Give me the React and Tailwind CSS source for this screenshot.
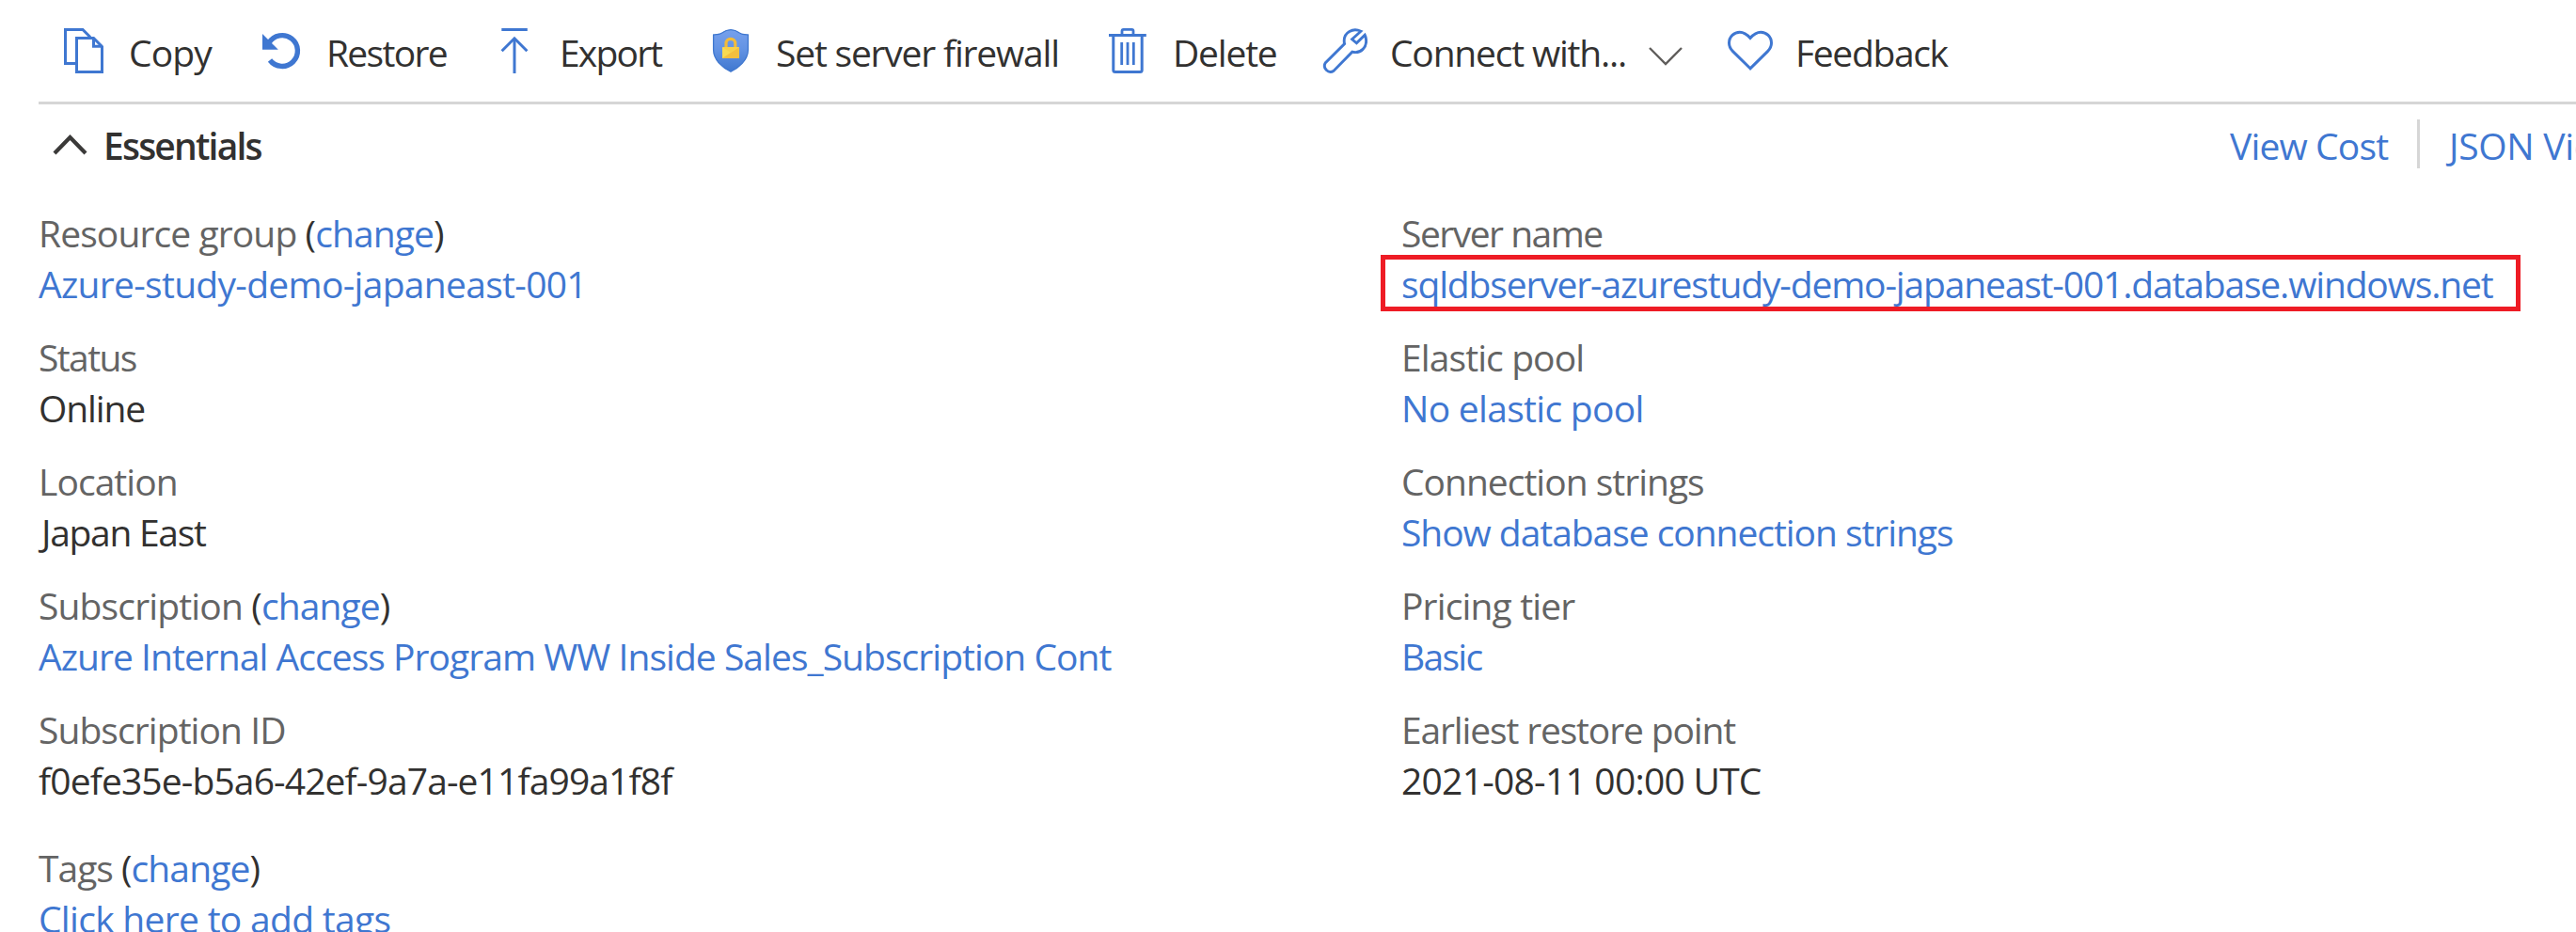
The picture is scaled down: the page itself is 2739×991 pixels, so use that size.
import React from 'react';

const BLUE = '#3f77d1';

function Icon({ children }) {
  return (
    <svg className="h-12 w-12 shrink-0" viewBox="0 0 48 48" fill="none" stroke={BLUE} strokeWidth="3">
      {children}
    </svg>
  );
}

const CopyIcon = () => (
  <Icon>
    <path d="M15 37.5H4.5V1.5H23L31 9.5" />
    <path d="M16.5 10.5H34.5L43.5 19.5V46.5H16.5Z" />
    <path d="M34.5 10.5V19.2H43.5" />
  </Icon>
);

const RestoreIcon = () => (
  <Icon>
    <path d="M11 15.5A16.4 16.4 0 1 1 12 34" strokeWidth="5.4" />
    <path d="M4 6L20.8 22.8H4Z" fill={BLUE} stroke="none" />
  </Icon>
);

const ExportIcon = () => (
  <Icon>
    <path d="M10.3 1.5H37.8" />
    <path d="M24 11V48" />
    <path d="M10.6 24.2L24 10.8L37.4 24.2" />
  </Icon>
);

const FirewallIcon = () => (
  <Icon>
    <defs>
      <linearGradient id="shield" x1="0" y1="0" x2="0" y2="1">
        <stop offset="0" stopColor="#76a0ec" />
        <stop offset="0.45" stopColor="#6494e4" />
        <stop offset="1" stopColor="#3f77cf" />
      </linearGradient>
    </defs>
    <path
      d="M24 1.6C28 1.6 31 3.2 33.4 5C36 6.8 39 6.8 42.4 7V23C42.4 34 32 42.6 24 46.2C16 42.6 5.6 34 5.6 23V7C9 6.8 12 6.8 14.6 5C17 3.2 20 1.6 24 1.6Z"
      fill="url(#shield)"
      stroke="#3f77cf"
      strokeWidth="1.3"
    />
    <path d="M19 20.5V16.2A4.9 4.9 0 0 1 28.8 16.2V20.5" stroke="#f1bb3b" strokeWidth="3.2" />
    <rect x="15" y="20" width="17.8" height="12" rx="0.6" fill="#f8da52" stroke="none" />
    <path d="M32.8 20V32H15Z" fill="#f3bf3e" stroke="none" />
    <path d="M15 20H32.8L24 26Z" fill="#f6d04a" stroke="none" />
  </Icon>
);

const DeleteIcon = () => (
  <Icon>
    <path d="M4 7.5H43.8" />
    <path d="M18 7V3Q18 1.4 19.6 1.4H28.4Q30 1.4 30 3V7" strokeWidth="2.8" />
    <path d="M8.8 8V44.5Q8.8 46.5 10.8 46.5H37.2Q39.2 46.5 39.2 44.5V8" />
    <path d="M17.7 15V39M24 15V39M30.3 15V39" strokeWidth="2.8" />
  </Icon>
);

const WrenchIcon = () => (
  <Icon>
    <path
      d="M41 3.2C32.5 -1 23 4.5 23.2 13.5C23.2 14.8 23.3 15.8 23.6 16.6L3.4 36.6A6.3 6.3 0 0 0 12.2 45.2L31.8 25.2C41 27.5 47.8 20 46.4 11.2C46.2 9.8 45.8 8.4 45.2 7.2L36.4 15.8L31.6 11.8Z"
      strokeWidth="2.9"
    />
  </Icon>
);

const HeartIcon = () => (
  <Icon>
    <path d="M24 42.8L5.5 24.6C2.5 21.6 1.5 18.8 1.5 15.8C1.5 8.6 7 4.2 12.8 4.2C17.8 4.2 21 7 24 10.4C27 7 30.2 4.2 35.2 4.2C41 4.2 46.5 8.6 46.5 15.8C46.5 18.8 45.5 21.6 42.5 24.6Z" />
  </Icon>
);

const COMMANDS = [
  { icon: CopyIcon, label: 'Copy', width: 'w-[210px]', text: 'tracking-[-0.9px]' },
  { icon: RestoreIcon, label: 'Restore', width: 'w-[248px]', text: 'tracking-[-1.7px]' },
  { icon: ExportIcon, label: 'Export', width: 'w-[230px]', text: 'tracking-[-1.8px]' },
  { icon: FirewallIcon, label: 'Set server firewall', width: 'w-[422px]', text: 'tracking-[-1.2px]' },
  { icon: DeleteIcon, label: 'Delete', width: 'w-[231px]', text: 'tracking-[-1.2px]' },
  { icon: WrenchIcon, label: 'Connect with...', width: 'w-[431px]', text: 'w-[275px] tracking-[-1.2px]', menu: true },
  { icon: HeartIcon, label: 'Feedback', width: 'w-[260px]', text: 'tracking-[-1.35px]' },
];

const LEFT = [
  { label: 'Resource group', lt: 'tracking-[-0.9px]', change: true, value: 'Azure-study-demo-japaneast-001', vt: 'tracking-[-0.7px]', link: true },
  { label: 'Status', lt: 'tracking-[-1.6px]', value: 'Online', vt: 'tracking-[-1.1px]' },
  { label: 'Location', lt: 'tracking-[-0.95px]', value: 'Japan East', vt: 'pl-[3px] tracking-[-1.3px]' },
  { label: 'Subscription', lt: 'tracking-[-0.85px]', change: true, value: 'Azure Internal Access Program WW Inside Sales_Subscription Cont', vt: 'tracking-[-0.96px]', link: true },
  { label: 'Subscription ID', lt: 'tracking-[-0.93px]', value: 'f0efe35e-b5a6-42ef-9a7a-e11fa99a1f8f', vt: 'tracking-[-0.88px]' },
  { label: 'Tags', lt: 'tracking-[-1px]', change: true, value: 'Click here to add tags', vt: 'tracking-[-0.7px]', link: true, spaced: true },
];

const RIGHT = [
  { label: 'Server name', lt: 'tracking-[-1.5px]', value: 'sqldbserver-azurestudy-demo-japaneast-001.database.windows.net', vt: 'tracking-[-1.16px]', link: true, marked: true },
  { label: 'Elastic pool', lt: 'tracking-[-0.9px]', value: 'No elastic pool', vt: 'tracking-[-0.7px]', link: true },
  { label: 'Connection strings', lt: 'tracking-[-1px]', value: 'Show database connection strings', vt: 'tracking-[-1.05px]', link: true },
  { label: 'Pricing tier', lt: 'tracking-[-0.85px]', value: 'Basic', vt: 'tracking-[-1.7px]', link: true },
  { label: 'Earliest restore point', lt: 'tracking-[-1.15px]', value: '2021-08-11 00:00 UTC', vt: 'tracking-[-0.75px]' },
];

function Command({ icon: Glyph, label, width, text, menu }) {
  return (
    <button className={`flex shrink-0 items-center gap-6 ${width}`}>
      <Glyph />
      <span className="flex items-center">
        <span className={`pt-[3px] text-left whitespace-nowrap ${text}`}>{label}</span>
        {menu && (
          <svg className="mt-3 h-5 w-9 shrink-0" viewBox="0 0 36 20" fill="none" stroke="#605e5c" strokeWidth="2.4">
            <path d="M1 1L18 18L35 1" />
          </svg>
        )}
      </span>
    </button>
  );
}

function Property({ label, lt, change, value, vt, link, marked, spaced }) {
  return (
    <div className={spaced ? 'mt-[15px]' : ''}>
      <dt className={`whitespace-nowrap text-[#646464] ${lt}`}>
        {label}
        {change && (
          <span className="text-[#323130]">
            {' ('}
            <a className="tracking-[-0.9px] text-[#3f77d1]">change</a>)
          </span>
        )}
      </dt>
      <dd className={`relative whitespace-nowrap ${vt} ${link ? 'text-[#3f77d1]' : 'text-[#323130]'}`}>
        {value}
        {marked && <span className="absolute -top-1 -left-[22px] h-[60px] w-[1212px] border-[5px] border-[#ee1c25]" />}
      </dd>
    </div>
  );
}

export default function App() {
  return (
    <main className="flex h-[991px] w-full flex-col overflow-hidden bg-white font-['Open_Sans',sans-serif] text-[39px] leading-[54px] text-[#323130]">
      <nav className="flex h-[108px] shrink-0 items-center pl-[65px]">
        {COMMANDS.map((c) => (
          <Command key={c.label} {...c} />
        ))}
      </nav>
      <div className="ml-[41px] h-[3px] shrink-0 bg-[#d6d6d6]" />
      <header className="flex h-[84px] shrink-0 items-center overflow-hidden pl-[56px]">
        <div className="flex w-[2315px] shrink-0 items-center gap-[17px]">
          <svg className="h-6 w-[37px] shrink-0" viewBox="0 0 37 24" fill="none" stroke="#3b3a39" strokeWidth="4.2">
            <path d="M2 22L18.5 5L35 22" />
          </svg>
          <h2 className="pt-[3px] font-semibold tracking-[-1.8px]">Essentials</h2>
        </div>
        <a className="w-[199px] shrink-0 pt-[3px] tracking-[-0.85px] whitespace-nowrap text-[#3f77d1]">View Cost</a>
        <div className="h-[52px] w-[3px] shrink-0 bg-[#d6d6d6]" />
        <a className="shrink-0 pt-[3px] pl-[31px] tracking-[-0.3px] whitespace-nowrap text-[#3f77d1]">JSON View</a>
      </header>
      <section className="grid grid-cols-[1449px_1fr] pt-[26px] pl-[41px]">
        <dl className="flex flex-col gap-6">
          {LEFT.map((p) => (
            <Property key={p.label} {...p} />
          ))}
        </dl>
        <dl className="flex flex-col gap-6">
          {RIGHT.map((p) => (
            <Property key={p.label} {...p} />
          ))}
        </dl>
      </section>
    </main>
  );
}
